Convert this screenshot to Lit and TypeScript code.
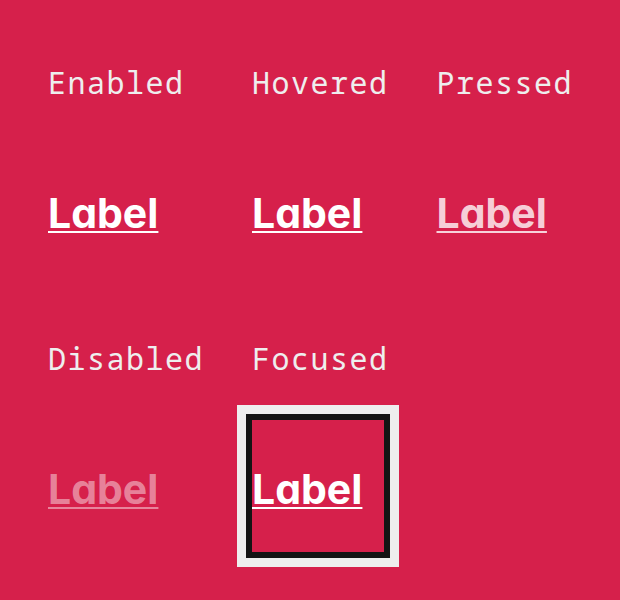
import { LitElement, html, css } from "lit";
import { customElement } from "lit/decorators.js";

interface LinkState {
  name: string;
  kind: string;
}

const STATES: LinkState[] = [
  { name: "Enabled", kind: "enabled" },
  { name: "Hovered", kind: "hovered" },
  { name: "Pressed", kind: "pressed" },
  { name: "Disabled", kind: "disabled" },
  { name: "Focused", kind: "focused" },
];

@customElement("app-root")
export class AppRoot extends LitElement {
  static styles = css`
    :host {
      display: block;
      box-sizing: border-box;
      min-height: 100vh;
      padding: 48px;
      background: #d6204b;
    }
    .states {
      display: grid;
      grid-template-columns: repeat(3, max-content);
      gap: 48px;
    }
    .state {
      display: flex;
      flex-direction: column;
      align-items: flex-start;
      gap: 26px;
    }
    .name {
      margin: 0;
      color: #eeeeee;
      font: 400 30px/70px "Noto Mono", "Droid Sans Mono", "Noto Sans Mono",
        "DejaVu Sans Mono", monospace;
      letter-spacing: 0.05em;
    }
    .link {
      display: flex;
      box-sizing: border-box;
      align-items: center;
      min-width: 132px;
      height: 132px;
      padding-top: 6px;
      color: #ffffff;
      font: 700 41px/60px Inter, "Open Sans", sans-serif;
      font-feature-settings: "cv11";
      text-decoration: none;
      outline: none;
    }
    .text {
      text-decoration: underline;
      text-decoration-thickness: 2px;
      text-underline-offset: 3px;
    }
    .pressed {
      color: rgba(255, 255, 255, 0.8);
    }
    .disabled {
      color: rgba(255, 255, 255, 0.45);
      cursor: not-allowed;
    }
    .focused {
      box-shadow: 0 0 0 6px #141414, 0 0 0 15px #eeeeee;
    }
  `;

  render() {
    return html`
      <main class="states">
        ${STATES.map(
          (s) => html`
            <section class="state">
              <h2 class="name" id=${s.kind}>${s.name}</h2>
              <a
                class="link ${s.kind}"
                href="#${s.kind}"
                aria-describedby=${s.kind}
                aria-disabled=${s.kind === "disabled" ? "true" : "false"}
                ><span class="text">Label</span></a
              >
            </section>
          `
        )}
      </main>
    `;
  }
}
